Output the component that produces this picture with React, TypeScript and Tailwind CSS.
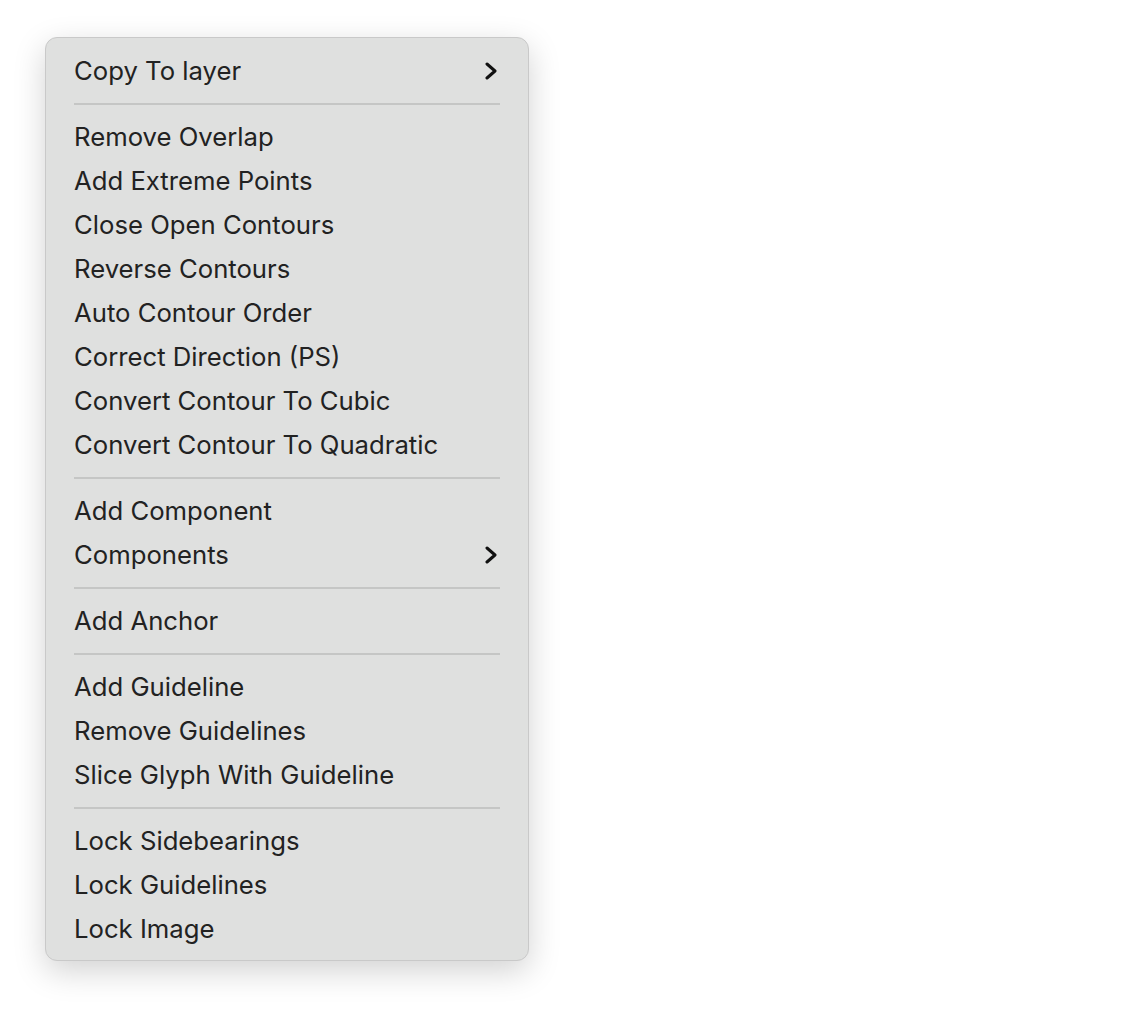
import React from "react";

type Entry = { label: string; submenu?: boolean } | "sep";

const entries: Entry[] = [
  { label: "Copy To layer", submenu: true },
  "sep",
  { label: "Remove Overlap" },
  { label: "Add Extreme Points" },
  { label: "Close Open Contours" },
  { label: "Reverse Contours" },
  { label: "Auto Contour Order" },
  { label: "Correct Direction (PS)" },
  { label: "Convert Contour To Cubic" },
  { label: "Convert Contour To Quadratic" },
  "sep",
  { label: "Add Component" },
  { label: "Components", submenu: true },
  "sep",
  { label: "Add Anchor" },
  "sep",
  { label: "Add Guideline" },
  { label: "Remove Guidelines" },
  { label: "Slice Glyph With Guideline" },
  "sep",
  { label: "Lock Sidebearings" },
  { label: "Lock Guidelines" },
  { label: "Lock Image" },
];

function Chevron() {
  return (
    <svg width="14" height="18" viewBox="0 0 14 18" fill="none">
      <path d="M3 2l8 7-8 7" stroke="#111" strokeWidth="3" strokeLinecap="round" strokeLinejoin="round" />
    </svg>
  );
}

export default function App() {
  return (
    <div className="min-h-screen w-full bg-white pt-[37px] pl-[45px]">
      <div
        className="w-[484px] rounded-[12px] border border-[#c9c9c9] bg-[#dfe0df] pt-[11px] pb-[9px] shadow-[0_10px_32px_rgba(0,0,0,0.18)]"
        style={{ fontFamily: "Inter, 'Noto Sans', sans-serif" }}
      >
        {entries.map((e, i) =>
          e === "sep" ? (
            <div key={i} className="flex h-[22px] items-center px-[28px]">
              <div className="h-[2px] w-full bg-[#c5c6c5]" />
            </div>
          ) : (
            <div key={i} className="flex h-[44px] items-center justify-between pl-[28px] pr-[30px]">
              <span className="text-[25.7px] leading-none text-[#222]">{e.label}</span>
              {e.submenu && <Chevron />}
            </div>
          )
        )}
      </div>
    </div>
  );
}
